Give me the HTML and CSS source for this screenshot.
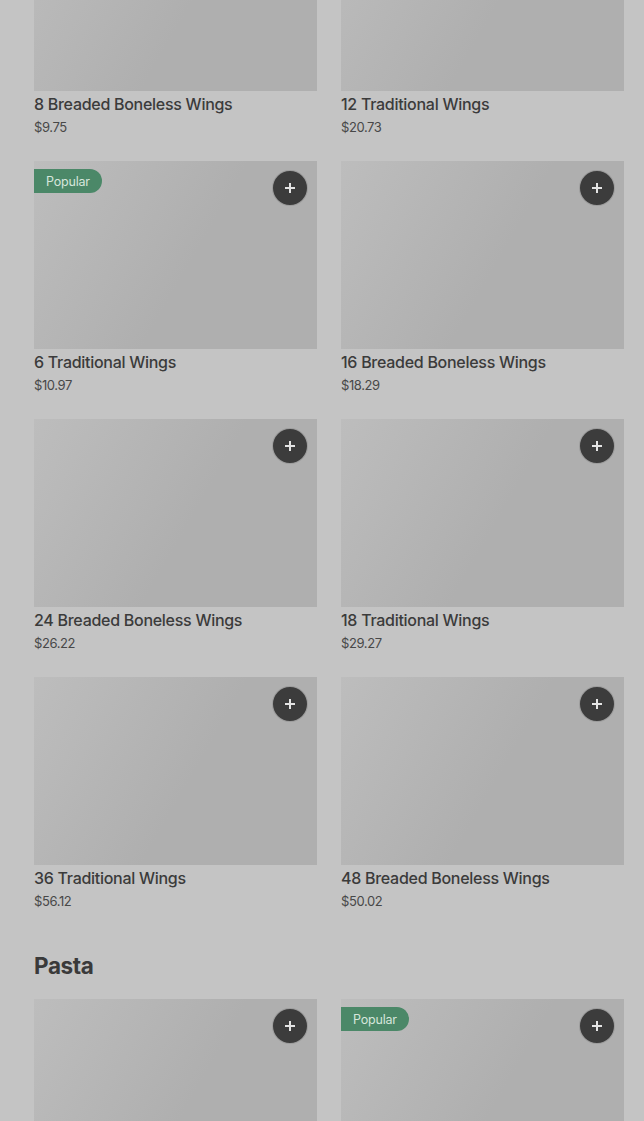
FILE: index.html
```html
<!DOCTYPE html>
<html lang="en">
<head>
	<meta charset="UTF-8">
	<meta name="viewport" content="width=device-width, initial-scale=1.0">
	<link rel="stylesheet" href="styles.css">
	<title>Menu</title>
</head>
<body>
	<main class="menu">
		<section class="category">
			<ul class="grid">
				<li class="item">
					<div class="thumb"></div>
					<h3>8 Breaded Boneless Wings</h3>
					<p class="price">$9.75</p>
				</li>
				<li class="item">
					<div class="thumb"></div>
					<h3>12 Traditional Wings</h3>
					<p class="price">$20.73</p>
				</li>
				<li class="item">
					<div class="thumb">
						<span class="badge">Popular</span>
						<button class="add" aria-label="Add"><svg width="12" height="12" viewBox="0 0 12 12"><path d="M6 1v10M1 6h10" stroke="currentColor" stroke-width="2"/></svg></button>
					</div>
					<h3>6 Traditional Wings</h3>
					<p class="price">$10.97</p>
				</li>
				<li class="item">
					<div class="thumb">
						<button class="add" aria-label="Add"><svg width="12" height="12" viewBox="0 0 12 12"><path d="M6 1v10M1 6h10" stroke="currentColor" stroke-width="2"/></svg></button>
					</div>
					<h3>16 Breaded Boneless Wings</h3>
					<p class="price">$18.29</p>
				</li>
				<li class="item">
					<div class="thumb">
						<button class="add" aria-label="Add"><svg width="12" height="12" viewBox="0 0 12 12"><path d="M6 1v10M1 6h10" stroke="currentColor" stroke-width="2"/></svg></button>
					</div>
					<h3>24 Breaded Boneless Wings</h3>
					<p class="price">$26.22</p>
				</li>
				<li class="item">
					<div class="thumb">
						<button class="add" aria-label="Add"><svg width="12" height="12" viewBox="0 0 12 12"><path d="M6 1v10M1 6h10" stroke="currentColor" stroke-width="2"/></svg></button>
					</div>
					<h3>18 Traditional Wings</h3>
					<p class="price">$29.27</p>
				</li>
				<li class="item">
					<div class="thumb">
						<button class="add" aria-label="Add"><svg width="12" height="12" viewBox="0 0 12 12"><path d="M6 1v10M1 6h10" stroke="currentColor" stroke-width="2"/></svg></button>
					</div>
					<h3>36 Traditional Wings</h3>
					<p class="price">$56.12</p>
				</li>
				<li class="item">
					<div class="thumb">
						<button class="add" aria-label="Add"><svg width="12" height="12" viewBox="0 0 12 12"><path d="M6 1v10M1 6h10" stroke="currentColor" stroke-width="2"/></svg></button>
					</div>
					<h3>48 Breaded Boneless Wings</h3>
					<p class="price">$50.02</p>
				</li>
			</ul>
		</section>
		<section class="category">
			<h2>Pasta</h2>
			<ul class="grid">
				<li class="item">
					<div class="thumb">
						<button class="add" aria-label="Add"><svg width="12" height="12" viewBox="0 0 12 12"><path d="M6 1v10M1 6h10" stroke="currentColor" stroke-width="2"/></svg></button>
					</div>
				</li>
				<li class="item">
					<div class="thumb">
						<span class="badge">Popular</span>
						<button class="add" aria-label="Add"><svg width="12" height="12" viewBox="0 0 12 12"><path d="M6 1v10M1 6h10" stroke="currentColor" stroke-width="2"/></svg></button>
					</div>
				</li>
			</ul>
		</section>
	</main>
</body>
</html>
```

FILE: styles.css
```css
* {
	box-sizing: border-box;
}

:root {
	--bg: #c4c4c4;
	--fg: #3b3b3b;
	--fg2: #484848;
	--thumb-a: #bdbdbd;
	--thumb-b: #afafaf;
	--badge: #4b8868;
	--btn: #3c3c3c;
}

html, body {
	height: 100%;
	overflow: hidden;
}

body {
	margin: 0;
	background: var(--bg);
	color: var(--fg);
	font-family: Inter, 'Noto Sans', sans-serif;
}

ul {
	margin: 0;
	padding: 0;
	list-style: none;
}

.menu {
	margin-top: -97px;
	padding: 0 20px 0 34px;
}

.category + .category {
	margin-top: 41px;
}

.category h2 {
	margin: 0 0 18px;
	font-size: 22.5px;
	line-height: 30px;
	font-weight: 700;
	letter-spacing: -0.4px;
	color: #3a3a3a;
}

.grid {
	display: grid;
	grid-template-columns: 283px 283px;
	column-gap: 24px;
	row-gap: 25px;
}

.thumb {
	position: relative;
	height: 188px;
	background: linear-gradient(120deg, var(--thumb-a), var(--thumb-b) 55%);
}

.item h3 {
	margin: 2px 0 0;
	font-size: 16px;
	line-height: 22px;
	font-weight: 500;
	letter-spacing: -0.28px;
}

.price {
	margin: 3px 0 0;
	font-size: 13px;
	line-height: 18px;
	color: var(--fg2);
	letter-spacing: -0.4px;
}

.badge {
	position: absolute;
	top: 8px;
	left: 0;
	height: 24px;
	padding: 0 12px 0 12px;
	display: flex;
	align-items: center;
	background: var(--badge);
	color: #d6e6dc;
	font-size: 12.5px;
	letter-spacing: -0.2px;
	border-radius: 0 12px 12px 0;
}

.add {
	position: absolute;
	top: 9px;
	right: 9px;
	width: 36px;
	height: 36px;
	padding: 0;
	display: flex;
	align-items: center;
	justify-content: center;
	border: 1px solid rgba(220, 220, 220, 0.6);
	border-radius: 50%;
	background: var(--btn);
	color: #e4e4e4;
	cursor: pointer;
}
```
